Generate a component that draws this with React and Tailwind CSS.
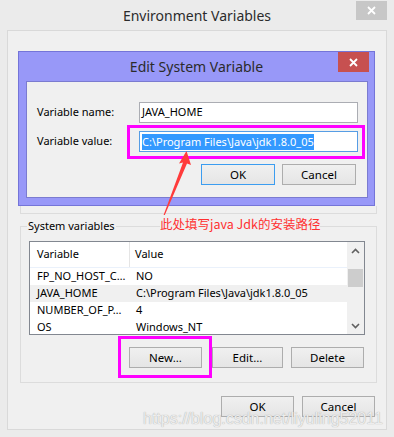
import React from 'react';

const CloseX = () => (
  <svg width="9" height="9" viewBox="0 0 9 9">
    <path d="M1 1L8 8M8 1L1 8" stroke="#fff" strokeWidth="1.8" />
  </svg>
);

function Btn({ children, w = 'w-[73px]', def, className = '' }) {
  return (
    <div
      className={`h-[21px] ${w} ${className} flex items-center justify-center border ${
        def ? 'border-[#3c9df0]' : 'border-[#adadad]'
      } bg-linear-to-b from-[#f0f0f0] to-[#e5e5e5] text-[11.5px] text-black`}
    >
      {children}
    </div>
  );
}

const Chevron = ({ up }) => (
  <svg width="9" height="6" viewBox="0 0 9 6">
    <path d={up ? 'M1 5L4.5 1.5L8 5' : 'M1 1L4.5 4.5L8 1'} stroke="#606060" strokeWidth="1.6" fill="none" />
  </svg>
);

const rows = [
  ['FP_NO_HOST_C…', 'NO'],
  ['JAVA_HOME', 'C:\\Program Files\\Java\\jdk1.8.0_05', true],
  ['NUMBER_OF_P…', '4'],
  ['OS', 'Windows_NT'],
];

export default function App() {
  return (
    <div className="relative w-[394px] h-[437px] bg-[#ebebeb] overflow-hidden font-['Noto_Sans',sans-serif] text-black">
      {/* Title bar */}
      <div className="relative h-[30px] flex items-center justify-center text-[14px] text-[#2b2b2b]">
        Environment Variables
        <div className="absolute right-[7px] top-[1px] w-[31px] h-[19px] bg-[#c7c7c7] flex items-center justify-center">
          <CloseX />
        </div>
      </div>

      {/* Main panel */}
      <div className="mx-[7px] h-[400px] border border-[#d9d9d9] bg-[#f0f0f0] flex flex-col">
        {/* Edit System Variable dialog */}
        <div className="ml-[10px] mt-[20px] w-[357px] h-[155px] border border-[#7474d8] bg-[#9898f8] flex flex-col">
          <div className="relative h-[29px] flex items-center justify-center text-[14px] text-[#2b2b2b]">
            Edit System Variable
            <div className="absolute right-[5px] top-0 w-[31px] h-[20px] bg-[#c75050] flex items-center justify-center">
              <CloseX />
            </div>
          </div>
          <div className="ml-[7px] mr-[6px] mb-[7px] flex-1 border border-[#7b7bd0] bg-[#f0f0f0] flex flex-col pt-[20px] pl-[10px] pr-[9px] text-[11px]">
            <div className="flex items-center h-[21px]">
              <div className="w-[102px]">Variable name:</div>
              <div className="w-[219px] h-[21px] border border-[#abadb3] bg-white flex items-center pl-[2px]">JAVA_HOME</div>
            </div>
            <div className="flex items-center h-[21px] mt-[8px]">
              <div className="w-[102px]">Variable value:</div>
              <div className="w-[219px] h-[21px] border border-[#569de5] bg-white flex items-center pl-[2px]">
                <span className="bg-[#3399ff] text-white leading-[16px]">C:\Program Files\Java\jdk1.8.0_05</span>
              </div>
            </div>
            <div className="flex justify-end mt-[12px] pr-[2px]">
              <Btn w="w-[74px]" def>OK</Btn>
              <Btn w="w-[74px]" className="ml-[7px]">Cancel</Btn>
            </div>
          </div>
        </div>

        {/* User variables group (bottom edge visible) */}
        <div className="ml-[12px] w-[357px] h-[8px] border-x border-b border-[#dcdcdc]" />

        {/* System variables group */}
        <div className="relative mt-[12px] ml-[12px] w-[357px] h-[157px] border border-[#dcdcdc] flex flex-col">
          <div className="absolute left-[6px] -top-[9px] px-[1px] bg-[#f0f0f0] text-[11px] leading-[16px]">System variables</div>
          <div className="ml-[8px] mt-[14px] w-[336px] h-[94px] border border-[#828790] bg-white flex text-[11px]">
            <div className="flex-1 flex flex-col overflow-hidden">
              <div className="h-[26px] shrink-0 flex items-center border-b border-[#eaf1fb]">
                <div className="w-[100px] h-full flex items-center pl-[7px] border-r border-[#e5e5e5]">Variable</div>
                <div className="pl-[5px]">Value</div>
              </div>
              {rows.map(([k, v, sel]) => (
                <div key={k} className={`h-[17px] shrink-0 flex items-center ${sel ? 'bg-[#f0f0f0]' : ''}`}>
                  <div className="w-[101px] pl-[7px] whitespace-nowrap">{k}</div>
                  <div className="pl-[5px] whitespace-nowrap">{v}</div>
                </div>
              ))}
            </div>
            <div className="w-[17px] bg-[#f0f0f0] flex flex-col">
              <div className="h-[17px] flex items-center justify-center"><Chevron up /></div>
              <div className="mt-[10px] mx-[1px] h-[18px] bg-[#cdcdcd]" />
              <div className="flex-1" />
              <div className="h-[17px] flex items-center justify-center"><Chevron /></div>
            </div>
          </div>
          <div className="mt-[12px] flex justify-end pr-[12px]">
            <Btn>New...</Btn>
            <Btn w="w-[71px]" className="ml-[10px]">Edit...</Btn>
            <Btn className="ml-[8px]">Delete</Btn>
          </div>
        </div>

        {/* Bottom buttons */}
        <div className="mt-[13px] flex justify-end pr-[11px]">
          <Btn>OK</Btn>
          <Btn className="ml-[8px]">Cancel</Btn>
        </div>
      </div>

      {/* Annotations */}
      <div className="absolute left-[127px] top-[125px] w-[238px] h-[34px] border-[3px] border-[#ff00ff]" />
      <div className="absolute left-[118px] top-[336px] w-[94px] h-[42px] border-[3px] border-[#ff00ff]" />
      <svg className="absolute left-0 top-0 pointer-events-none" width="394" height="437" viewBox="0 0 394 437">
        <path d="M186.5 151L191 165L187 163.5L164.8 215L163.6 215L183 162.5L179 163.5Z" fill="#ff3b3b" />
      </svg>
      <div className="absolute left-[160px] top-[215px] text-[12.5px] leading-[18px] text-[#ff3030] bg-[#f0f0f0] font-['Noto_Sans_CJK_SC','Noto_Sans',sans-serif] whitespace-nowrap">
        此处填写java Jdk的安装路径
      </div>
      <div className="absolute left-[143px] top-[409px] text-[16px] leading-[20px] text-[#ededed] [text-shadow:0_0_1px_#9a9a9a] font-['Liberation_Sans',sans-serif] whitespace-nowrap">
        https://blog.csdn.net/liyuling52011
      </div>
    </div>
  );
}
